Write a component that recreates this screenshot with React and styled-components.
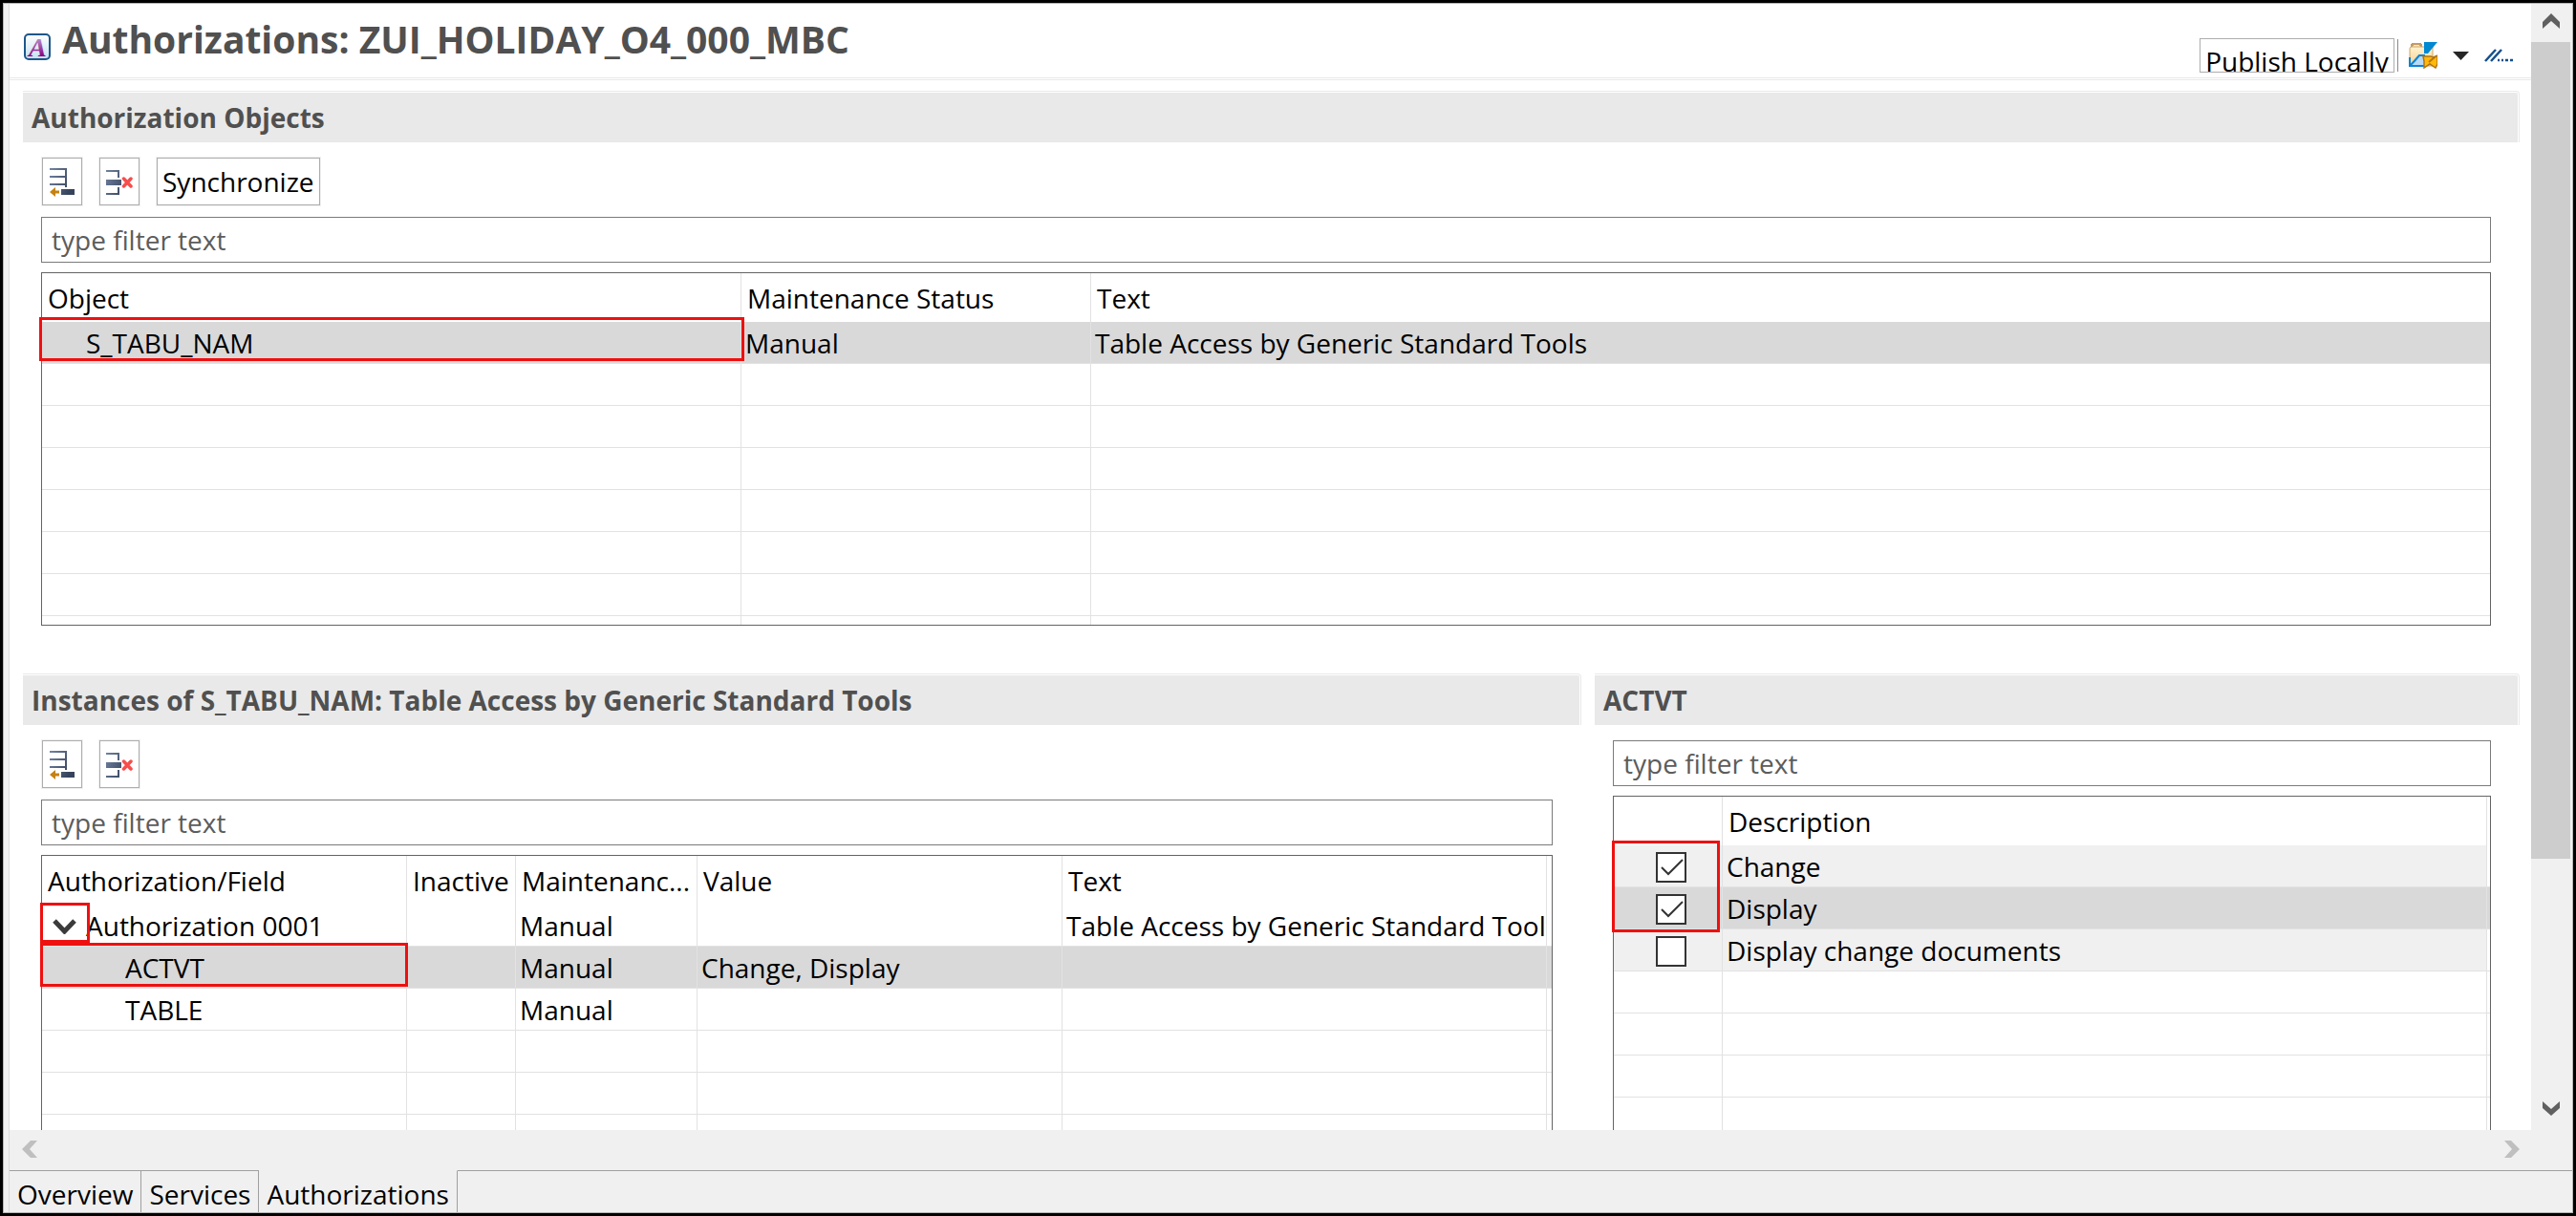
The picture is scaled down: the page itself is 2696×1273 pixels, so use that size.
import React, { useState } from "react";
import styled, { createGlobalStyle, css } from "styled-components";

const GlobalStyle = createGlobalStyle`
  *, *::before, *::after { box-sizing: border-box; }
  body {
    margin: 0;
    background: #f0f0f0;
    color: #000;
    font-family: "Open Sans", "Noto Sans", sans-serif;
    font-size: 28px;
    line-height: 38px;
  }
  button, input { font: inherit; color: inherit; }
  svg { display: block; flex: none; }
`;

const GRID = "#e2e2e2";
const BAND = "#e9e9e9";

/* ---------- window frame ---------- */

const Frame = styled.div`
  height: 100vh;
  border: 3px solid #000;
  background: #f0f0f0;
`;

const FrameInner = styled.div`
  height: 100%;
  border: 1px solid #b4b4b4;
  padding-left: 5px;
`;

const Editor = styled.div`
  height: 100%;
  display: grid;
  grid-template-columns: minmax(0, 1fr) 43px;
  grid-template-rows: minmax(0, 1fr) 42px 44px;
  border-left: 1px solid #dcdcdc;
`;

const Page = styled.main`
  overflow: hidden;
  background: #fff;
`;

/* ---------- form header ---------- */

const Header = styled.header`
  display: flex;
  justify-content: space-between;
  align-items: flex-end;
  height: 80px;
  padding: 0 19px 5px 15px;
  border-bottom: 3px double ${BAND};
`;

const TitleGroup = styled.div`
  display: flex;
  align-items: flex-end;
  gap: 12px;
  padding-bottom: 9px;
`;

const TitleIconBox = styled.span`
  padding-bottom: 4px;
`;

const Title = styled.h1`
  margin: 0;
  font-size: 39px;
  line-height: 53px;
  font-weight: 700;
  color: #505050;
  white-space: nowrap;
`;

const Tools = styled.div`
  display: flex;
  align-items: center;
  height: 36px;
`;

const PublishButton = styled.button`
  display: flex;
  align-items: flex-start;
  justify-content: center;
  width: 204px;
  height: 36px;
  padding: 4px 0 0;
  border: 1px solid #adadad;
  background: #fff;
  white-space: nowrap;
  overflow: clip;
  overflow-clip-margin: 1px;
`;

const ToolSeparator = styled.span`
  width: 1px;
  height: 34px;
  margin: 0 11px 0 3px;
  background: #8a8a8a;
`;

const PlainButton = styled.button`
  padding: 0;
  border: 0;
  background: none;
`;

const ImageTools = styled.div`
  display: flex;
  align-items: center;
  gap: 16px;
`;

/* ---------- sections ---------- */

const Sections = styled.div`
  padding: 11px 12px 0 14px;
`;

const Split = styled.div`
  display: grid;
  grid-template-columns: minmax(0, 1631fr) minmax(0, 968fr);
  gap: 14px;
  padding-top: 50px;
`;

const SectionTitle = styled.h2`
  margin: 0;
  padding: 6px 9px 7px;
  border: 3px double ${BAND};
  border-left: 0;
  border-bottom: 0;
  border-top-right-radius: 4px;
  background: ${BAND} padding-box;
  font-size: 28px;
  line-height: 38px;
  font-weight: 700;
  color: #505050;
  white-space: nowrap;
`;

const SectionBody = styled.div`
  padding: 16px 30px 0 19px;
`;

const Toolbar = styled.div`
  display: flex;
  gap: 18px;
  padding: 0 0 12px 1px;
`;

const toolButton = css`
  height: 50px;
  border: 1px solid #adadad;
  box-shadow: 0 0 0 1px #f0f0f0;
  background: #fff;
`;

const IconButton = styled.button`
  ${toolButton}
  display: flex;
  align-items: center;
  justify-content: center;
  width: 42px;
  padding: 2px 0 0;
`;

const TextButton = styled.button`
  ${toolButton}
  padding: 0 5px;
`;

const Filter = styled.input`
  display: block;
  width: 100%;
  height: 48px;
  margin-bottom: 10px;
  padding: 0 10px;
  border: 1px solid #7a7a7a;
  border-radius: 0;
  outline: 0;
  background: #fff;
  &::placeholder { color: #5c5c5c; opacity: 1; }
`;

/* ---------- grids ---------- */

const TableBox = styled.div`
  border: 1px solid #646464;
`;

const Table = styled.table`
  width: 100%;
  table-layout: fixed;
  border-collapse: separate;
  border-spacing: 0;
`;

const Col = styled.col`
  width: ${(p) => (p.$w ? `${p.$w}px` : "auto")};
`;

const HeadCell = styled.th`
  height: 51px;
  padding: 0 0 0 6px;
  border-right: 1px solid ${GRID};
  font-weight: 400;
  text-align: left;
  white-space: nowrap;
  &:last-child { border-right: 0; padding: 0; }
  &:last-child:not(:empty) { padding-left: 6px; }
`;

const Cell = styled.td`
  position: relative;
  height: ${(p) => (p.$short ? 9 : 44)}px;
  padding: 0 0 0 ${(p) => p.$indent ?? 4}px;
  border-right: 1px solid ${GRID};
  border-bottom: ${(p) => (p.$short ? 0 : 1)}px solid ${GRID};
  white-space: nowrap;
  overflow: ${(p) => (p.$clip ? "hidden" : "visible")};
  &:last-child { border-right: 0; }
`;

const Row = styled.tr`
  background: ${(p) => (p.$selected ? "#d9d9d9" : "transparent")};
  ${(p) => p.$shaded && css`
    ${Cell}:not(:last-child) { background: #f0f0f0; }
  `}
`;

const Expander = styled.button`
  display: inline-block;
  width: 25px;
  margin-right: 10px;
  padding: 0 0 4px;
  border: 0;
  background: none;
  vertical-align: middle;
`;

const Mark = styled.span`
  position: absolute;
  z-index: 1;
  top: ${(p) => p.$top}px;
  left: ${(p) => p.$left}px;
  right: ${(p) => (p.$right == null ? "auto" : `${p.$right}px`)};
  width: ${(p) => (p.$width ? `${p.$width}px` : "auto")};
  height: ${(p) => p.$height}px;
  border: 3px solid #ee1010;
  pointer-events: none;
`;

const CheckLabel = styled.span`
  display: grid;
  width: 32px;
  height: 32px;
  margin: 2px 0 0 44px;
  > * { grid-area: 1 / 1; }
  svg { pointer-events: none; }
`;

const CheckInput = styled.input`
  appearance: none;
  width: 32px;
  height: 32px;
  margin: 0;
  border: 2px solid #333;
  background: #fff;
`;

/* ---------- scroll bars and page tabs ---------- */

const VScroll = styled.div`
  display: flex;
  flex-direction: column;
  padding-right: 2px;
`;

const HScroll = styled.div`
  display: flex;
  justify-content: space-between;
  grid-column: 1 / -1;
  padding-right: 42px;
`;

const ScrollButton = styled.button`
  display: flex;
  align-items: center;
  justify-content: center;
  width: 42px;
  height: 40px;
  padding: 0 0 ${(p) => (p.$vertical ? 5 : 0)}px;
  border: 0;
  background: none;
`;

const Thumb = styled.div`
  flex: 855;
  background: #cdcdcd;
`;

const Track = styled.div`
  flex: 244;
`;

const Tabs = styled.nav`
  grid-column: 1 / -1;
  display: flex;
  &::after {
    content: "";
    flex: 1;
    border-top: 1px solid #9f9f9f;
  }
`;

const Tab = styled.button`
  padding: 4px 8px 0;
  border: 0;
  border-top: 1px solid ${(p) => (p.$active ? "transparent" : "#9f9f9f")};
  border-right: 1px solid #9f9f9f;
  background: none;
`;

/* ---------- drawings ---------- */

const TitleIcon = () => (
  <svg width="28" height="28" viewBox="0 0 28 28" aria-hidden="true">
    <defs>
      <linearGradient id="plate" x1="0" y1="0" x2="0" y2="1">
        <stop offset="0" stopColor="#ffffff" />
        <stop offset="1" stopColor="#c4e0f2" />
      </linearGradient>
      <linearGradient id="letter" x1="0" y1="0" x2="0" y2="1">
        <stop offset="0.2" stopColor="#b890cc" />
        <stop offset="0.8" stopColor="#87007f" />
      </linearGradient>
    </defs>
    <rect x="1" y="1" width="26" height="26" rx="4" fill="url(#plate)" stroke="#1d5789" strokeWidth="2" />
    <text x="5" y="24" fontFamily="Liberation Serif" fontStyle="italic" fontWeight="700" fontSize="28" fill="url(#letter)">A</text>
  </svg>
);

const Slate = ({ id }) => (
  <defs>
    <linearGradient id={id} gradientUnits="userSpaceOnUse" x1="0" y1="0" x2="26" y2="12">
      <stop offset="0" stopColor="#7384a3" />
      <stop offset="1" stopColor="#36435c" />
    </linearGradient>
  </defs>
);

const InsertRowIcon = () => (
  <svg width="28" height="30" viewBox="-1 0 28 30" aria-hidden="true">
    <Slate id="slateInsert" />
    <g fill="url(#slateInsert)">
      <rect x="0" y="0" width="18" height="2" />
      <rect x="0" y="8" width="18" height="2" />
      <rect x="0" y="16" width="18" height="2" />
      <rect x="16" y="0" width="2" height="20" />
      <rect x="12" y="22" width="14" height="6" />
    </g>
    <path d="M0 25 L6 20 V23.500 H10 V26.500 H6 V30 Z" fill="#c58210" />
  </svg>
);

const DeleteRowIcon = () => (
  <svg width="28" height="30" viewBox="0 0 28 30" aria-hidden="true">
    <Slate id="slateDelete" />
    <g fill="url(#slateDelete)">
      <rect x="0" y="2" width="14" height="2" />
      <rect x="12" y="2" width="2" height="8" />
      <rect x="0" y="12" width="16" height="6" />
      <rect x="12" y="20" width="2" height="8" />
      <rect x="0" y="26" width="14" height="2" />
    </g>
    <path d="M18.500 11 L26 19 M26 11 L18.500 19" stroke="#f64d4d" strokeWidth="3.500" strokeLinecap="round" />
  </svg>
);

const FolderIcon = () => (
  <svg width="30" height="28" viewBox="0 0 30 28" aria-hidden="true">
    <defs>
      <linearGradient id="folder" x1="0" y1="0" x2="0" y2="1">
        <stop offset="0" stopColor="#fff3d2" />
        <stop offset="1" stopColor="#f2cf8c" />
      </linearGradient>
    </defs>
    <path d="M3 6 V3 H4 V2 H12 V3 H13 V6" fill="#fbe8bf" stroke="#c79a62" strokeWidth="2" />
    <path d="M1 7 Q1 5 3 5 H25 V25 H1 Z" fill="url(#folder)" stroke="#d0a669" strokeWidth="1" />
    <path d="M2 25 Q6 20 11 14 H18 V25 Z" fill="#b9d9f5" />
    <path d="M1 16 V25 H16 M2 24 Q6 20 11 14 H17" fill="none" stroke="#0c83d6" strokeWidth="2" />
    <path d="M16 0 H30 L20 12 H16 Z" fill="#0088d1" />
    <path d="M15 15 H23 L26 16 L30 14 V23 L28 27 L22 23 L16 27 V20 Z" fill="#ffb908" stroke="#b07413" strokeWidth="1.500" />
    <path d="M21 21 L28 15" stroke="#b07413" strokeWidth="2" />
  </svg>
);

const DropIcon = () => (
  <svg width="17" height="9" viewBox="0 0 17 9" aria-hidden="true">
    <path d="M0 0 H17 L8.500 9 Z" fill="#262626" />
  </svg>
);

const MoreIcon = () => (
  <svg width="30" height="14" viewBox="0 0 30 14" aria-hidden="true">
    <path d="M1 13 L12 1 M7 13 L18 1" stroke="#14508a" strokeWidth="2.500" />
    <path d="M14 12 H16 M18 12 H20 M22 12 H25 M27 12 H30" stroke="#14508a" strokeWidth="2.500" />
  </svg>
);

const CHEVRONS = {
  up: { w: 18, h: 16, d: "M0 9 L9 0 L18 9 V16 L9 8 L0 16 Z" },
  down: { w: 18, h: 15, d: "M0 0 L9 8 L18 0 V7 L9 15 L0 7 Z" },
  left: { w: 16, h: 18, d: "M9 0 H16 L8 9 L16 18 H9 L0 9 Z" },
  right: { w: 16, h: 18, d: "M0 0 H7 L16 9 L7 18 H0 L8 9 Z" },
};

const ScrollArrow = ({ dir, color }) => {
  const { w, h, d } = CHEVRONS[dir];
  return (
    <svg width={w} height={h} viewBox={`0 0 ${w} ${h}`} aria-hidden="true">
      <path d={d} fill={color} />
    </svg>
  );
};

const ExpandIcon = () => (
  <svg width="25" height="16" viewBox="0 0 25 16" aria-hidden="true">
    <path d="M2 2 L12.500 13 L23 2" fill="none" stroke="#3b3b3b" strokeWidth="5" />
  </svg>
);

/* ---------- parts ---------- */

const RowTools = ({ children }) => (
  <Toolbar>
    <IconButton aria-label="Insert row"><InsertRowIcon /></IconButton>
    <IconButton aria-label="Delete row"><DeleteRowIcon /></IconButton>
    {children}
  </Toolbar>
);

const FilterBox = ({ label }) => (
  <Filter type="text" placeholder="type filter text" aria-label={label} />
);

const Grid = ({ cols, heads, children, blanks, partial }) => (
  <TableBox>
    <Table>
      <colgroup>
        {cols.map((w, i) => <Col key={i} $w={w} />)}
      </colgroup>
      <thead>
        <tr>{heads.map((h, i) => <HeadCell key={i}>{h}</HeadCell>)}</tr>
      </thead>
      <tbody>
        {children}
        {Array.from({ length: blanks }, (_, r) => (
          <Row key={`blank-${r}`}>
            {cols.map((_, i) => <Cell key={i} $indent={0} />)}
          </Row>
        ))}
        {partial && (
          <Row>{cols.map((_, i) => <Cell key={i} $indent={0} $short />)}</Row>
        )}
      </tbody>
    </Table>
  </TableBox>
);

const ACTIVITIES = [
  { name: "Change", checked: true },
  { name: "Display", checked: true, selected: true },
  { name: "Display change documents", checked: false },
];

const Activity = ({ item, first }) => {
  const [on, setOn] = useState(item.checked);
  const id = `act-${item.name.replace(/ /g, "-").toLowerCase()}`;
  return (
    <Row $selected={item.selected} $shaded={!item.selected}>
      <Cell $indent={0}>
        <CheckLabel>
          <CheckInput id={id} type="checkbox" checked={on} onChange={() => setOn(!on)} />
          {on && (
            <svg width="32" height="32" viewBox="0 0 32 32" aria-hidden="true">
              <path d="M6 16 L13 23 L28 8" fill="none" stroke="#333" strokeWidth="2" />
            </svg>
          )}
        </CheckLabel>
        {first && <Mark $top={-5} $left={-2} $right={2} $height={96} />}
      </Cell>
      <Cell><label htmlFor={id}>{item.name}</label></Cell>
      <Cell $indent={0} />
    </Row>
  );
};

const TABS = ["Overview", "Services", "Authorizations"];

export default function App() {
  const [tab, setTab] = useState("Authorizations");
  return (
    <>
      <GlobalStyle />
      <Frame>
        <FrameInner>
          <Editor>
            <Page>
              <Header>
                <TitleGroup>
                  <TitleIconBox><TitleIcon /></TitleIconBox>
                  <Title>Authorizations: ZUI_HOLIDAY_O4_000_MBC</Title>
                </TitleGroup>
                <Tools>
                  <PublishButton>Publish Locally</PublishButton>
                  <ToolSeparator />
                  <ImageTools>
                    <PlainButton aria-label="Open folder"><FolderIcon /></PlainButton>
                    <PlainButton aria-label="Folder menu"><DropIcon /></PlainButton>
                    <PlainButton aria-label="More"><MoreIcon /></PlainButton>
                  </ImageTools>
                </Tools>
              </Header>

              <Sections>
                <section>
                  <SectionTitle>Authorization Objects</SectionTitle>
                  <SectionBody>
                    <RowTools><TextButton>Synchronize</TextButton></RowTools>
                    <FilterBox label="Filter authorization objects" />
                    <Grid
                      cols={[732, 366, null]}
                      heads={["Object", "Maintenance Status", "Text"]}
                      blanks={6}
                      partial
                    >
                      <Row $selected>
                        <Cell $indent={46}>
                          S_TABU_NAM
                          <Mark $top={-5} $left={-3} $right={-4} $height={46} />
                        </Cell>
                        <Cell>Manual</Cell>
                        <Cell>Table Access by Generic Standard Tools</Cell>
                      </Row>
                    </Grid>
                  </SectionBody>
                </section>

                <Split>
                  <section>
                    <SectionTitle>Instances of S_TABU_NAM: Table Access by Generic Standard Tools</SectionTitle>
                    <SectionBody>
                      <RowTools />
                      <FilterBox label="Filter instances" />
                      <Grid
                        cols={[382, 114, 190, 382, null, 5]}
                        heads={["Authorization/Field", "Inactive", "Maintenanc...", "Value", "Text", ""]}
                        blanks={6}
                      >
                        <Row>
                          <Cell $indent={11}>
                            <Expander aria-label="Collapse"><ExpandIcon /></Expander>
                            Authorization 0001
                            <Mark $top={-2} $left={-2} $width={52} $height={42} />
                          </Cell>
                          <Cell />
                          <Cell>Manual</Cell>
                          <Cell />
                          <Cell $clip>Table Access by Generic Standard Tools</Cell>
                          <Cell $indent={0} />
                        </Row>
                        <Row $selected>
                          <Cell $indent={87}>
                            ACTVT
                            <Mark $top={-4} $left={-2} $right={-2} $height={46} />
                          </Cell>
                          <Cell />
                          <Cell>Manual</Cell>
                          <Cell>Change, Display</Cell>
                          <Cell />
                          <Cell $indent={0} />
                        </Row>
                        <Row>
                          <Cell $indent={87}>TABLE</Cell>
                          <Cell />
                          <Cell>Manual</Cell>
                          <Cell />
                          <Cell />
                          <Cell $indent={0} />
                        </Row>
                      </Grid>
                    </SectionBody>
                  </section>

                  <section>
                    <SectionTitle>ACTVT</SectionTitle>
                    <SectionBody>
                      <FilterBox label="Filter activities" />
                      <Grid cols={[114, null, 3]} heads={["", "Description", ""]} blanks={6}>
                        {ACTIVITIES.map((a, i) => (
                          <Activity key={a.name} item={a} first={i === 0} />
                        ))}
                      </Grid>
                    </SectionBody>
                  </section>
                </Split>
              </Sections>
            </Page>

            <VScroll>
              <ScrollButton $vertical aria-label="Scroll up"><ScrollArrow dir="up" color="#606060" /></ScrollButton>
              <Thumb />
              <Track />
              <ScrollButton $vertical aria-label="Scroll down"><ScrollArrow dir="down" color="#606060" /></ScrollButton>
            </VScroll>

            <HScroll>
              <ScrollButton aria-label="Scroll left"><ScrollArrow dir="left" color="#bfbfbf" /></ScrollButton>
              <ScrollButton aria-label="Scroll right"><ScrollArrow dir="right" color="#bfbfbf" /></ScrollButton>
            </HScroll>

            <Tabs aria-label="Editor pages">
              {TABS.map((t) => (
                <Tab key={t} $active={t === tab} onClick={() => setTab(t)}>{t}</Tab>
              ))}
            </Tabs>
          </Editor>
        </FrameInner>
      </Frame>
    </>
  );
}
